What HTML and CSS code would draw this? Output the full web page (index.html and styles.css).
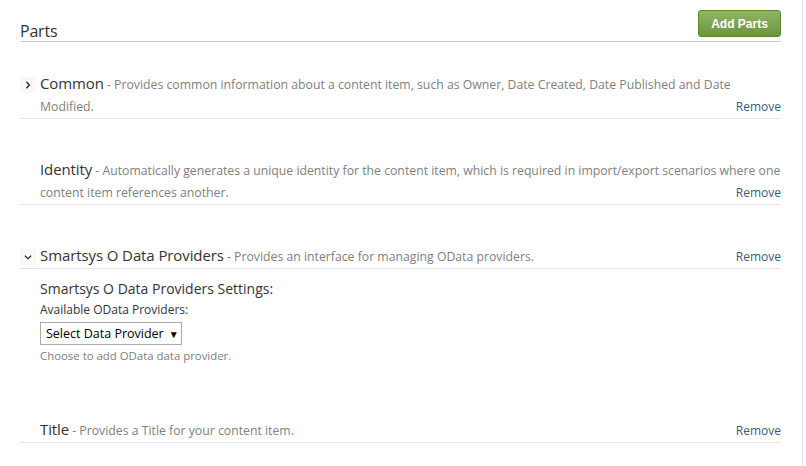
FILE: index.html
```html
<!DOCTYPE html>
<html>
<head>
<meta charset="utf-8">
<title>Parts</title>
<link rel="stylesheet" href="styles.css">
</head>
<body>
<div class="page">
  <div class="container">
    <div class="header">
      <h2 class="heading">Parts</h2>
      <button class="btn-add">Add Parts</button>
    </div>

    <div class="part first">
      <div class="summary">
        <div class="icon-col"><span class="chev">
          <svg width="8" height="8" viewBox="0 0 8 8"><path d="M2.4 0.8 L5.4 4 L2.4 7.2" fill="none" stroke="#222" stroke-width="1.3"/></svg>
        </span></div>
        <div class="text"><span class="title">Common</span> <span class="desc">- Provides common information about a content item, such as Owner, Date Created, Date Published and Date Modified.</span><a class="remove">Remove</a></div>
      </div>
    </div>

    <div class="part">
      <div class="summary">
        <div class="icon-col"></div>
        <div class="text"><span class="title">Identity</span> <span class="desc">- Automatically generates a unique identity for the content item, which is required in import/export scenarios where one content item references another.</span><a class="remove">Remove</a></div>
      </div>
    </div>

    <div class="part expanded">
      <div class="summary">
        <div class="icon-col"><span class="chev">
          <svg width="8" height="8" viewBox="0 0 8 8"><path d="M0.8 2.6 L4 5.6 L7.2 2.6" fill="none" stroke="#222" stroke-width="1.3"/></svg>
        </span></div>
        <div class="text"><span class="title">Smartsys O Data Providers</span> <span class="desc">- Provides an interface for managing OData providers.</span><a class="remove">Remove</a></div>
      </div>
    </div>
    <div class="settings">
      <div class="settings-title">Smartsys O Data Providers Settings:</div>
      <div class="settings-label">Available OData Providers:</div>
      <div class="select">Select Data Provider <span class="arrow">&#9660;</span></div>
      <div class="hint">Choose to add OData data provider.</div>
    </div>

    <div class="part after-settings">
      <div class="summary">
        <div class="icon-col"></div>
        <div class="text"><span class="title">Title</span> <span class="desc">- Provides a Title for your content item.</span><a class="remove">Remove</a></div>
      </div>
    </div>
  </div>
</div>
</body>
</html>
```

FILE: styles.css
```css
html, body {
  margin: 0;
  padding: 0;
  background: #fff;
}
body {
  font-family: "Open Sans", "Noto Sans", sans-serif;
  color: #333;
}
.page {
  width: 803px;
  min-height: 466px;
  border-right: 1px solid #e2e2e2;
  box-sizing: border-box;
  padding-top: 10px;
}
.container {
  margin-left: 20px;
  width: 761px;
}
.header {
  display: flex;
  justify-content: space-between;
  align-items: flex-end;
  border-bottom: 1px solid #cccccc;
}
.heading {
  margin: 0;
  font-weight: normal;
  font-size: 16px;
  line-height: 20px;
  color: #333;
  letter-spacing: -0.2px;
}
.btn-add {
  width: 83px;
  height: 27px;
  margin-bottom: 4px;
  border: 1px solid #5c8634;
  border-radius: 3px;
  background: linear-gradient(#8fb565, #6c953f);
  color: #fff;
  font-family: "Liberation Sans", Arial, sans-serif;
  font-weight: bold;
  font-size: 12px;
  padding: 0;
}
.part {
  margin-top: 40px;
  border-bottom: 1px solid #e6e6e6;
}
.part.first {
  margin-top: 31px;
}
.part.after-settings {
  margin-top: 54px;
}
.summary {
  display: flex;
}
.icon-col {
  width: 20px;
  flex: none;
}
.chev {
  display: flex;
  align-items: center;
  justify-content: center;
  width: 16px;
  height: 16px;
  margin-top: 4px;
  background: #f8f8f8;
}
.text {
  flex: 1;
  font-size: 12px;
  line-height: 22px;
  padding-top: 1px;
}
.title {
  font-size: 15px;
  line-height: 15px;
  color: #333;
  letter-spacing: -0.1px;
}
.desc {
  font-size: 12.25px;
  line-height: 15px;
  color: #808080;
}
.remove {
  float: right;
  font-size: 12px;
  color: #3a5b78;
  cursor: pointer;
}
.settings {
  padding-left: 20px;
  padding-top: 9px;
}
.settings-title {
  font-size: 14px;
  line-height: 22px;
  color: #333;
}
.settings-label {
  font-size: 12px;
  line-height: 20px;
  color: #333;
}
.select {
  display: inline-flex;
  align-items: center;
  box-sizing: border-box;
  width: 142px;
  height: 23px;
  margin-top: 2px;
  padding-left: 5px;
  border: 1px solid #a9a9a9;
  font-size: 12.5px;
  color: #000;
  white-space: nowrap;
}
.arrow {
  font-size: 10px;
  margin-left: 5px;
}
.hint {
  margin-top: 2px;
  font-size: 11.4px;
  line-height: 18px;
  color: #808080;
}
```
